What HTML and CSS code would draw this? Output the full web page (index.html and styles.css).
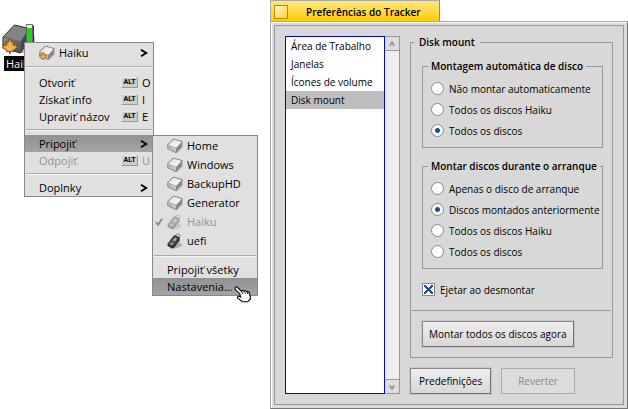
FILE: index.html
```html
<!DOCTYPE html>
<html lang="pt">
<head>
<meta charset="utf-8">
<title>Preferências do Tracker</title>
<link rel="stylesheet" href="styles.css">
</head>
<body>
<svg class="defs" aria-hidden="true">
  <defs>
    <linearGradient id="dark-front" x1="0" y1="0" x2="1" y2="1"><stop offset="0" stop-color="#8a8a8a"/><stop offset="1" stop-color="#505050"/></linearGradient>
    <linearGradient id="light-top" x1="0" y1="0" x2="1" y2="1"><stop offset="0" stop-color="#dcdcdc"/><stop offset="1" stop-color="#ffffff"/></linearGradient>
    <symbol id="leaf" viewBox="0 0 16 16">
      <path d="M8 .6 9.8 4.4 11.6 3.4 11.5 7.3 15.4 6.2 14.3 8.6 15.5 9.7 11.2 12.4 11.6 13.6 8.6 13.2 8.4 15.6H7.6L7.4 13.2 4.4 13.6 4.8 12.4.5 9.7 1.7 8.6.6 6.2 4.5 7.3 4.4 3.4 6.2 4.4Z" fill="#e8a040" stroke="#7c4608" stroke-width=".9"/>
      <path d="M8 4v9M8 12 4 8.800M8 12l4-3.200" fill="none" stroke="#fbd78b" stroke-width=".8"/>
    </symbol>
    <symbol id="disk" viewBox="0 0 16 16">
      <path d="M3 12.500 9.500 15.600 15.800 9.500V7.500L9 14Z" fill="#999" opacity=".5"/>
      <path d="M6.300 1 15.200 3.600 14.600 8.600 9.200 14.500.8 10.800.8 6.600Z" fill="#888" stroke="#777" stroke-width=".8" stroke-linejoin="round"/>
      <path d="M6.500 1.400 14.700 3.900 9.300 9.700 1.200 6.700Z" fill="url(#light-top)"/>
      <path d="M1.200 7.100 9 10V13.900L1.200 10.500Z" fill="#c4c4c4"/>
      <path d="M9.500 10 14.700 4.500 14.200 8.400 9.500 13.600Z" fill="#8a8a8a"/>
      <path d="M2.300 8.800h1.200v1.200H2.300Z" fill="#e5613b"/>
    </symbol>
    <symbol id="usb" viewBox="0 0 16 16">
      <path d="M6 14.500 9 15.500 15.500 12.500 12.500 9Z" fill="#888" opacity=".6"/>
      <path d="M8.500 3 10.200.7 13.200 2.200 12 5Z" fill="#dfe6ee" stroke="#667" stroke-width=".8"/>
      <path d="M6.800 3 8 2.600 12.300 4.600 12.400 7.300 6.600 15 5.200 15.200.9 12.800.9 10.800Z" fill="#2c2c2c" stroke="#222" stroke-width=".6" stroke-linejoin="round"/>
      <path d="M7.500 3.400 11.700 5.300 5.900 13 1.600 10.900Z" fill="#5a5a5a"/>
      <path d="M7.800 4.700 9.900 5.700 8 8.200 5.900 7.200Z" fill="#aaa"/>
      <circle cx="4.600" cy="10.900" r="1.100" fill="#57e557"/>
    </symbol>
    <symbol id="arrow" viewBox="0 0 8 8"><path d="M1 .8 6.200 4 1 7.200" fill="none" stroke="#000" stroke-width="1.900"/></symbol>
  </defs>
</svg>

<main class="desktop">
  <section class="workspace" aria-label="Haiku">
    <div class="volume">
      <svg class="volume-icon" viewBox="0 0 34 32" aria-hidden="true">
        <path d="M10 26 24 30 33 20V12L22 26Z" fill="#777" opacity=".5"/>
        <path d="M12.500 1 27 4.500 26.500 17 18.500 29 1 24 1 13Z" fill="#555" stroke="#222" stroke-linejoin="round"/>
        <path d="M12.700 1.500 26.500 5 18.500 17.500 1.500 12.800Z" fill="#838383"/>
        <path d="M1.500 13.300 18.300 18V28.400L1.500 23.600Z" fill="url(#dark-front)"/>
        <path d="M19 18 26.500 6V17L19 28Z" fill="#454545"/>
        <path d="M24.500.5h6v21h-6Z" fill="#eee" stroke="#666"/>
        <path d="M25 4h5v17h-5Z" fill="#13d813"/>
        <path d="M31.500 1.500V22" stroke="#333"/>
        <use href="#leaf" x="0" y="14" width="16" height="16"/>
      </svg>
      <span class="volume-name">Haiku</span>
    </div>

    <div class="menu context" role="menu" lang="sk">
      <button class="item tall" role="menuitem"><svg class="icon" aria-hidden="true"><use href="#disk" width="16" height="16"/><use href="#leaf" y="7" width="8" height="8"/></svg><span>Haiku</span><svg class="arrow" aria-hidden="true"><use href="#arrow"/></svg></button>
      <hr>
      <button class="item" role="menuitem"><span>Otvoriť</span><kbd>ALT</kbd><b>O</b></button>
      <button class="item" role="menuitem"><span>Získať info</span><kbd>ALT</kbd><b>I</b></button>
      <button class="item" role="menuitem"><span>Upraviť názov</span><kbd>ALT</kbd><b>E</b></button>
      <hr>
      <button class="item active" role="menuitem"><span>Pripojiť</span><svg class="arrow" aria-hidden="true"><use href="#arrow"/></svg></button>
      <button class="item" role="menuitem" disabled><span>Odpojiť</span><kbd>ALT</kbd><b>U</b></button>
      <hr>
      <button class="item" role="menuitem"><span>Doplnky</span><svg class="arrow" aria-hidden="true"><use href="#arrow"/></svg></button>
    </div>

    <div class="menu submenu" role="menu" lang="sk">
      <button class="item disk" role="menuitem"><svg class="icon" aria-hidden="true"><use href="#disk"/></svg><span>Home</span></button>
      <button class="item disk" role="menuitem"><svg class="icon" aria-hidden="true"><use href="#disk"/></svg><span>Windows</span></button>
      <button class="item disk" role="menuitem"><svg class="icon" aria-hidden="true"><use href="#disk"/></svg><span>BackupHD</span></button>
      <button class="item disk" role="menuitem"><svg class="icon" aria-hidden="true"><use href="#disk"/></svg><span>Generator</span></button>
      <button class="item disk checked" role="menuitem" disabled><svg class="check" viewBox="0 0 8 8" aria-hidden="true"><path d="M1 4.200 3.200 6.800 7 .8" fill="none" stroke="#888" stroke-width="1.900"/></svg><svg class="icon" aria-hidden="true"><use href="#usb"/></svg><span>Haiku</span></button>
      <button class="item disk" role="menuitem"><svg class="icon" aria-hidden="true"><use href="#usb"/></svg><span>uefi</span></button>
      <hr>
      <button class="item" role="menuitem"><span>Pripojiť všetky</span></button>
      <button class="item active" role="menuitem"><span>Nastavenia...</span></button>
      <svg class="pointer" viewBox="0 0 18 17" aria-hidden="true">
        <path d="M1 2.200C1 .8 2.700.5 3.600 1.500L7.500 5.300C8 4.200 9.500 4.200 10.200 5.200 11 4.400 12.200 4.700 12.900 5.700 13.900 5.200 15 5.900 15.300 7.200L16.300 10.500 16.500 13 13.500 15.800H8.500L4 12.400C3 11.500 3.600 10 5 10.300L6.700 11.100 5.700 7.700 1.500 3.800Z" fill="#fff" stroke="#000" stroke-width="1.100"/>
        <path d="M7.500 5.300 9 8M10.200 5.200 11.500 7.600M12.900 5.700 13.900 8" stroke="#000" stroke-width=".9"/>
      </svg>
    </div>
  </section>

  <section class="window">
    <header class="tab"><button class="close" aria-label="Fechar"></button><h1>Preferências do Tracker</h1></header>
    <div class="frame">
      <div class="content">
        <div class="list">
          <ul role="listbox" aria-label="Preferências">
            <li role="option">Área de Trabalho</li>
            <li role="option">Janelas</li>
            <li role="option">Ícones de volume</li>
            <li role="option" aria-selected="true">Disk mount</li>
          </ul>
          <div class="scrollbar">
            <button aria-label="Subir"><svg viewBox="0 0 6 6" aria-hidden="true"><path d="M.8 4.800 3 1.200 5.200 4.800" fill="none" stroke="#979797" stroke-width="1.700"/></svg></button>
            <button aria-label="Descer"><svg viewBox="0 0 6 6" aria-hidden="true"><path d="M.8 1.200 3 4.800 5.200 1.200" fill="none" stroke="#979797" stroke-width="1.700"/></svg></button>
          </div>
        </div>
        <div class="panel">
          <fieldset class="outer">
            <legend>Disk mount</legend>
            <fieldset class="group">
              <legend>Montagem automática de disco</legend>
              <label><input type="radio" name="auto">Não montar automaticamente</label>
              <label><input type="radio" name="auto">Todos os discos Haiku</label>
              <label><input type="radio" name="auto" checked>Todos os discos</label>
            </fieldset>
            <fieldset class="group">
              <legend>Montar discos durante o arranque</legend>
              <label><input type="radio" name="boot">Apenas o disco de arranque</label>
              <label><input type="radio" name="boot" checked>Discos montados anteriormente</label>
              <label><input type="radio" name="boot">Todos os discos Haiku</label>
              <label><input type="radio" name="boot">Todos os discos</label>
            </fieldset>
            <label class="eject"><input type="checkbox" checked>Ejetar ao desmontar</label>
            <hr>
            <button class="push mount">Montar todos os discos agora</button>
          </fieldset>
          <div class="actions">
            <button class="push">Predefinições</button>
            <button class="push revert" disabled>Reverter</button>
          </div>
        </div>
      </div>
    </div>
  </section>
</main>
</body>
</html>
```
FILE: styles.css
```css
* { box-sizing: border-box; }
body { margin: 0; background: #fff; color: #000; font: 10px/16px "Open Sans", "Noto Sans", sans-serif; }
button { font: inherit; color: inherit; margin: 0; }
.defs { position: absolute; width: 0; height: 0; }
.desktop { display: grid; grid-template-columns: 270px minmax(0, 1fr); min-height: 100vh; }
.workspace { position: relative; }

/* Desktop volume */
.volume { position: absolute; left: 2px; top: 24px; width: 34px; }
.volume-icon { display: block; width: 34px; height: 32px; }
.volume-name { display: inline-block; margin-left: 2px; padding: 0 2px; background: #000; color: #fff; font-size: 11px; line-height: 15px; }

/* Menus */
.menu { position: absolute; display: flex; flex-direction: column; background: #e0e0e0; border: 1px solid #888; font-size: 11px; }
.context { left: 24px; top: 42px; width: 130px; }
.submenu { left: 152px; top: 135px; width: 106px; }
.menu hr { width: calc(100% - 2px); height: 2px; margin: 4px 1px; border: 0; border-top: 1px solid #aaa; border-bottom: 1px solid #f4f4f4; }
.submenu hr { margin-top: 5px; }
.item { display: flex; align-items: center; height: 17px; padding: 0 3px 0 14px; border: 0; background: none; text-align: left; line-height: 16px; white-space: nowrap; }
.item span { flex: 1; }
.item:disabled { color: #939393; }
.item.active { background: linear-gradient(#919191, #a4a4a4); }
.item.tall { height: 20px; }
.tall + hr { margin-top: 3px; margin-bottom: 6px; }
.icon { width: 16px; height: 16px; margin-right: 4px; }
.arrow { width: 8px; height: 8px; margin-right: 2px; }
.item kbd { width: 17px; height: 11px; background: #ccc; border: 1px solid; border-color: #e8e8e8 #999 #999 #e8e8e8; color: #000; font: bold 7px/9px Roboto, sans-serif; text-align: center; }
.item b { width: 8px; margin-left: 4px; font-weight: 400; }
.item.disk { height: 19px; }
.item.checked { padding-left: 2px; }
.check { width: 8px; height: 8px; margin-right: 4px; }
.checked .icon { opacity: .35; }
.pointer { position: absolute; right: 5px; bottom: -8px; width: 18px; height: 17px; }

/* Preferences window */
.window { display: flex; flex-direction: column; }
.tab { display: flex; align-items: center; align-self: flex-start; gap: 18px; height: 22px; padding: 0 18px 0 3px; border: 1px solid #aaa; border-right-color: #888; border-bottom: 0; background: linear-gradient(#ffe77d, #ffcb05); }
.tab h1 { margin: 0; font-size: 10px; font-weight: 600; line-height: 16px; white-space: nowrap; }
.close { width: 14px; height: 14px; padding: 0; border: 1px solid #b58b00; background: linear-gradient(135deg, #fffbd8, #ffd030); }
.frame { flex: 1; display: flex; margin-top: -1px; padding: 3px; background: #dcdcdc; border: 1px solid; border-color: #aaa #777 #777 #aaa; box-shadow: inset 1px 1px #f8f8f8; }
.content { flex: 1; min-width: 0; display: grid; grid-template-columns: 115px minmax(0, 1fr); gap: 10px; padding: 10px; background: #d8d8d8; border: 1px solid #979797; }
.list { display: grid; grid-template-columns: 1fr 15px; background: #eee; }
.list ul { margin: 0; padding: 0; list-style: none; background: #fff; border: 1px solid #0000e5; }
.list li { padding: 1px 5px; }
.list li[aria-selected] { background: #bebebe; }
.scrollbar { display: flex; flex-direction: column; justify-content: space-between; border: 1px solid #979797; border-left: 0; }
.scrollbar button { display: grid; place-items: center; height: 14px; padding: 0; border: 0 solid #979797; background: #ddd; }
.scrollbar button:first-child { border-bottom-width: 1px; }
.scrollbar button:last-child { border-top-width: 1px; }
.scrollbar svg { width: 6px; height: 6px; }
.panel { display: flex; flex-direction: column; justify-content: space-between; margin-top: -2px; }
fieldset { min-width: 0; margin: 0; border: 1px solid #979797; }
legend { padding: 0 5px; font-weight: 600; white-space: nowrap; }
.outer { padding: 8px 9px 10px 11px; }
.outer > legend { margin-left: -8px; }
.group { padding: 4px 0 6px 8px; margin-bottom: 10px; }
.group > legend { padding: 0 3px; margin-left: -3px; }
label { display: flex; align-items: center; gap: 5px; height: 21px; white-space: nowrap; }
input { appearance: none; flex: none; width: 13px; height: 13px; margin: 0; background: #fff; border: 1px solid #888; }
input[type="radio"] { border-radius: 50%; }
input[type="radio"]:checked { background: radial-gradient(circle, #1b4f94 2px, #fff 3px); }
input[type="checkbox"]:checked { background: linear-gradient(45deg, transparent 43%, #1b4f94 44% 56%, transparent 57%) center / 9px 9px no-repeat, linear-gradient(135deg, transparent 43%, #1b4f94 44% 56%, transparent 57%) center / 9px 9px no-repeat, #fff; }
.outer > hr { height: 1px; margin: 10px -8px 10px -10px; border: 0; background: #979797; }
.push { height: 26px; padding: 0 8px; border: 1px solid; border-color: #888 #6e6e6e #6e6e6e #888; background: linear-gradient(#eee, #d8d8d8); box-shadow: 0 0 0 1px #c8c8c8; white-space: nowrap; }
.mount { padding: 0 6px; }
.push:disabled { color: #888; border-color: #aaa; background: #dcdcdc; box-shadow: none; }
.actions { display: flex; gap: 10px; }
.revert { padding: 0 16px; }
```
